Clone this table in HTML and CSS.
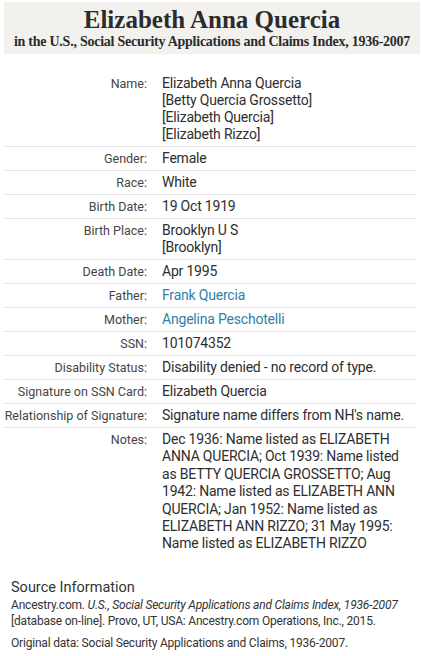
FILE: index.html
```html
<!DOCTYPE html>
<html lang="en">
<head>
<meta charset="utf-8">
<title>Elizabeth Anna Quercia</title>
<link rel="stylesheet" href="styles.css">
</head>
<body>
<header class="header">
  <h1 class="title">Elizabeth Anna Quercia</h1>
  <p class="subtitle">in the U.S., Social Security Applications and Claims Index, 1936-2007</p>
</header>
<table class="record">
  <tbody>
    <tr><th>Name:</th><td>Elizabeth Anna Quercia<br>[Betty Quercia Grossetto]<br>[Elizabeth Quercia]<br>[Elizabeth Rizzo]</td></tr>
    <tr><th>Gender:</th><td>Female</td></tr>
    <tr><th>Race:</th><td>White</td></tr>
    <tr><th>Birth Date:</th><td>19 Oct 1919</td></tr>
    <tr><th>Birth Place:</th><td>Brooklyn U S<br>[Brooklyn]</td></tr>
    <tr><th>Death Date:</th><td>Apr 1995</td></tr>
    <tr><th>Father:</th><td><a class="link" href="#">Frank Quercia</a></td></tr>
    <tr><th>Mother:</th><td><a class="link" href="#">Angelina Peschotelli</a></td></tr>
    <tr><th>SSN:</th><td>101074352</td></tr>
    <tr><th>Disability Status:</th><td>Disability denied - no record of type.</td></tr>
    <tr><th>Signature on SSN Card:</th><td>Elizabeth Quercia</td></tr>
    <tr><th>Relationship of Signature:</th><td>Signature name differs from NH's name.</td></tr>
    <tr class="last"><th>Notes:</th><td class="notes">Dec 1936: Name listed as ELIZABETH ANNA QUERCIA; Oct 1939: Name listed as BETTY QUERCIA GROSSETTO; Aug 1942: Name listed as ELIZABETH ANN QUERCIA; Jan 1952: Name listed as ELIZABETH ANN RIZZO; 31 May 1995: Name listed as ELIZABETH RIZZO</td></tr>
  </tbody>
</table>
<section class="source">
  <h2 class="source-title">Source Information</h2>
  <p class="source-text">Ancestry.com. <em>U.S., Social Security Applications and Claims Index, 1936-2007</em> [database on-line]. Provo, UT, USA: Ancestry.com Operations, Inc., 2015.</p>
  <p class="source-text original">Original data: Social Security Applications and Claims, 1936-2007.</p>
</section>
</body>
</html>
```
FILE: styles.css
```css
html, body {
  margin: 0;
  padding: 0;
  background: #ffffff;
}
body {
  font-family: Roboto, "Liberation Sans", Arial, sans-serif;
  color: #333333;
}
.header {
  margin: 2px 2px 0 4px;
  background: #f3f1ee;
  text-align: center;
  padding: 5px 0 4px;
}
.title {
  margin: 0;
  font-family: "Liberation Serif", "Times New Roman", serif;
  font-weight: bold;
  font-size: 25px;
  line-height: 26px;
  color: #2b2b2b;
}
.subtitle {
  margin: 0;
  font-family: "Liberation Serif", "Times New Roman", serif;
  font-weight: bold;
  font-size: 14px;
  letter-spacing: -0.25px;
  line-height: 17px;
  color: #2b2b2b;
  white-space: nowrap;
}
.record {
  margin: 18px 6px 0 4px;
  width: 412px;
  border-collapse: collapse;
}
.record tr {
  border-bottom: 1px solid #e4e4e4;
}
.record tr.last {
  border-bottom: none;
}
.record th {
  width: 143px;
  padding: 3px 15px 3px 0;
  text-align: right;
  vertical-align: top;
  font-weight: normal;
  font-size: 12.5px;
  line-height: 17px;
  color: #454545;
  white-space: nowrap;
}
.record td {
  padding: 3px 0;
  vertical-align: top;
  font-size: 14px;
  letter-spacing: -0.2px;
  line-height: 17px;
  color: #2e2e2e;
}
.record td.notes {
  line-height: 17.4px;
}
.link {
  color: #2f7fa6;
  text-decoration: none;
}
.source {
  margin: 23px 10px 0 11px;
}
.source-title {
  margin: 0;
  font-weight: normal;
  font-size: 14.5px;
  line-height: 18px;
  color: #333333;
}
.source-text {
  margin: 0;
  font-size: 12px;
  letter-spacing: -0.2px;
  line-height: 16px;
  color: #333333;
}
.source-text.original {
  margin-top: 6px;
}
```
